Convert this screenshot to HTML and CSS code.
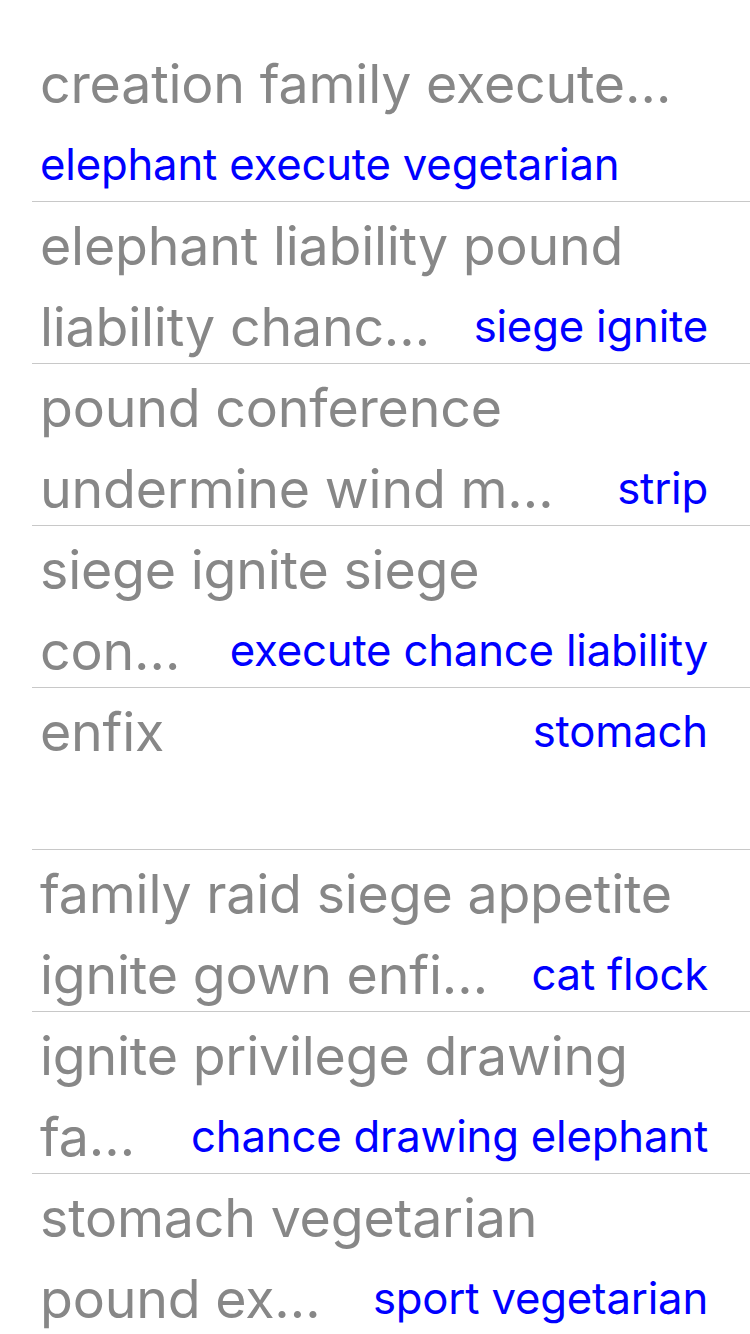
FILE: index.html
```html
<!DOCTYPE html>
<html>
<head>
<meta charset="utf-8">
<link rel="stylesheet" href="styles.css">
</head>
<body>
<div class="list">
  <div class="row">
    <div class="line"><span class="title">creation family execute…</span></div>
    <div class="line"><span class="detail">elephant execute vegetarian</span></div>
  </div>
  <div class="row">
    <div class="line"><span class="title">elephant liability pound</span></div>
    <div class="line"><span class="title">liability chanc…</span><span class="detail">siege ignite</span></div>
  </div>
  <div class="row">
    <div class="line"><span class="title">pound conference</span></div>
    <div class="line"><span class="title">undermine wind m…</span><span class="detail">strip</span></div>
  </div>
  <div class="row">
    <div class="line"><span class="title">siege ignite siege</span></div>
    <div class="line"><span class="title">con…</span><span class="detail">execute chance liability</span></div>
  </div>
  <div class="row">
    <div class="line"><span class="title">enfix</span><span class="detail">stomach</span></div>
    <div class="line"></div>
  </div>
  <div class="row">
    <div class="line"><span class="title">family raid siege appetite</span></div>
    <div class="line"><span class="title">ignite gown enfi…</span><span class="detail">cat flock</span></div>
  </div>
  <div class="row">
    <div class="line"><span class="title">ignite privilege drawing</span></div>
    <div class="line"><span class="title">fa…</span><span class="detail">chance drawing elephant</span></div>
  </div>
  <div class="row">
    <div class="line"><span class="title">stomach vegetarian</span></div>
    <div class="line"><span class="title">pound ex…</span><span class="detail">sport vegetarian</span></div>
  </div>
</div>
</body>
</html>
```
FILE: styles.css
```css
html, body {
  margin: 0;
  padding: 0;
  background: #ffffff;
}
body {
  font-family: Inter, "Noto Sans", sans-serif;
  padding-top: 40px;
  overflow: hidden;
  height: 1334px;
  box-sizing: border-box;
}
.list {
  display: flex;
  flex-direction: column;
}
.row {
  box-sizing: border-box;
  margin-left: 32px;
  padding: 4px 42px 0 8px;
  border-bottom: 1px solid #c8c8c8;
  height: 162px;
  display: flex;
  flex-direction: column;
}
.line {
  flex: none;
  height: 80.5px;
  line-height: 80.5px;
  display: flex;
  justify-content: space-between;
  align-items: center;
  white-space: nowrap;
}
.title {
  color: #878787;
  font-size: 53.7px;
  letter-spacing: -0.2px;
}
.detail {
  color: #0000ff;
  font-size: 43.7px;
  letter-spacing: -0.2px;
}
```
